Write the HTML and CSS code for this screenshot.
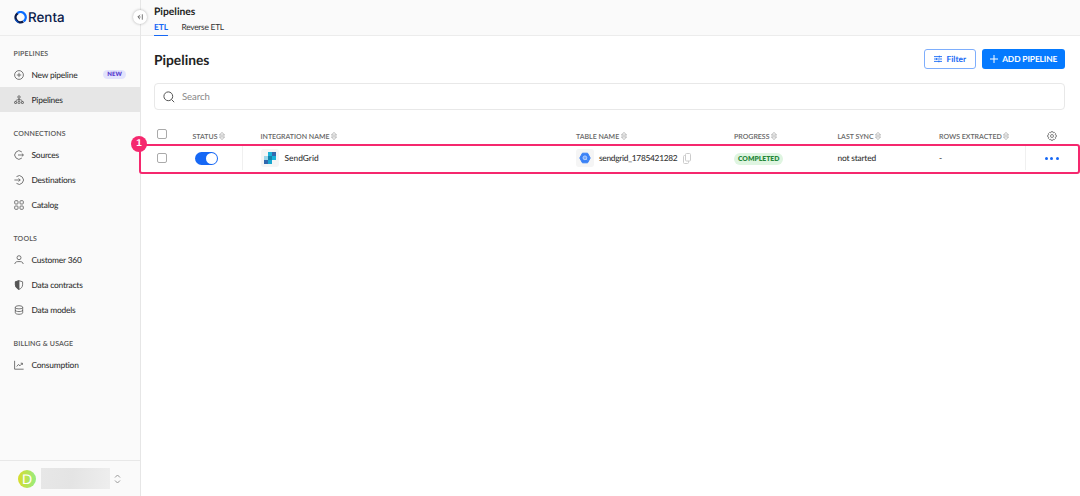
FILE: index.html
```html
<!DOCTYPE html>
<html lang="en">
  <head>
    <meta charset="UTF-8" />
    <meta name="viewport" content="width=device-width, initial-scale=1.0" />
    <title>Pipelines</title>
    <link rel="stylesheet" href="styles.css">
  </head>
  <body>
    <svg class="sprite" width="0" height="0">
      <symbol id="sort" viewBox="0 0 6 8">
        <path d="M3 .4 5.600 3.100H.4zM3 7.600.4 4.900h5.200z" />
      </symbol>
    </svg>
    <div class="app">
      <aside class="sidebar">
        <div class="sidebar__header">
          <svg class="logo" viewBox="0 0 13 13">
            <path d="M3.800 2.200A4.900 4.900 0 0 0 9.300 10.500" stroke="#0b1a4a" stroke-width="2.400" />
            <path d="M3.400 2.100A5.100 5.100 0 0 1 9.600 10.400" stroke="#0a6cff" stroke-width="2.400" />
            <path d="M1.400 8.500A5.500 5.500 0 0 0 4.500 11.600" stroke="#0a6cff" stroke-width="1" />
          </svg>
          <span class="logo-text">Renta</span>
          <button type="button" class="collapse">
            <svg width="8" height="8" viewBox="0 0 8 8"><path d="M4 1.800 1.800 4 4 6.200M2 4h2.600M6.300 1.300v5.400" /></svg>
          </button>
        </div>
        <nav class="nav">
          <section class="nav__group">
            <h2>PIPELINES</h2>
            <a class="nav__item">
              <svg viewBox="0 0 10 10"><circle cx="5" cy="5" r="4.400" /><path d="M5 2.800v4.400M2.800 5h4.400" /></svg>
              New pipeline
              <span class="nav__new">NEW</span>
            </a>
            <a class="nav__item nav__item--active">
              <svg viewBox="0 0 10 10"><circle cx="5" cy="2" r="1.200" /><rect x=".6" y="6.500" width="2" height="2" rx=".5" /><rect x="4" y="6.500" width="2" height="2" rx=".5" /><rect x="7.400" y="6.500" width="2" height="2" rx=".5" /><path d="M5 3.200v3.300M1.600 6.500C1.800 5.300 3 4.600 5 4.600s3.200.7 3.400 1.900" /></svg>
              Pipelines
            </a>
          </section>
          <section class="nav__group">
            <h2>CONNECTIONS</h2>
            <a class="nav__item">
              <svg viewBox="0 0 10 10"><path d="M7.800 1.900A4.200 4.200 0 1 0 7.800 8.100M4 5h5.400M7.800 3.500 9.400 5 7.800 6.500" /></svg>
              Sources
            </a>
            <a class="nav__item">
              <svg viewBox="0 0 10 10"><path d="M2.500 1.600A4.300 4.300 0 1 1 2.500 8.400M.4 5h5.800M4.600 3.400 6.200 5 4.600 6.600" /></svg>
              Destinations
            </a>
            <a class="nav__item">
              <svg viewBox="0 0 10 10"><rect x=".7" y=".7" width="3.300" height="3.300" rx=".8" /><rect x="6" y=".7" width="3.300" height="3.300" rx=".8" /><rect x=".7" y="6" width="3.300" height="3.300" rx=".8" /><rect x="6" y="6" width="3.300" height="3.300" rx=".8" /></svg>
              Catalog
            </a>
          </section>
          <section class="nav__group">
            <h2>TOOLS</h2>
            <a class="nav__item">
              <svg viewBox="0 0 10 10"><circle cx="5" cy="2.700" r="2" /><path d="M.8 9c.2-1.600 1.400-2.400 3-2.400h2.400c1.600 0 2.800.8 3 2.400" /></svg>
              Customer 360
            </a>
            <a class="nav__item">
              <svg viewBox="0 0 10 10"><path d="M5 .7 8.600 1.800v3C8.600 7 7 8.600 5 9.400 3 8.600 1.400 7 1.400 4.800v-3z" /><path class="solid" d="M5 .7v8.700C3 8.600 1.400 7 1.400 4.800v-3z" /></svg>
              Data contracts
            </a>
            <a class="nav__item">
              <svg viewBox="0 0 10 10"><ellipse cx="5" cy="2.300" rx="3.700" ry="1.600" /><path d="M1.300 2.300v5.400c0 2.100 7.400 2.100 7.400 0V2.300M1.300 5c0 2.100 7.400 2.100 7.400 0" /></svg>
              Data models
            </a>
          </section>
          <section class="nav__group">
            <h2>BILLING &amp; USAGE</h2>
            <a class="nav__item">
              <svg viewBox="0 0 10 10"><path d="M.6.800v8.400h9M2.700 6.500l1.700-2 1.600 1.300 2.300-2.500M6.700 3.200h1.700v1.700" /></svg>
              Consumption
            </a>
          </section>
        </nav>
        <div class="account">
          <span class="account__avatar">D</span>
          <span class="account__name"></span>
          <svg class="account__toggle" width="7" height="10" viewBox="0 0 7 10"><path d="M1 3.500 3.500 1 6 3.500M1 6.500 3.500 9 6 6.500" /></svg>
        </div>
      </aside>

      <main class="main">
        <header class="topbar">
          <div class="topbar__title">Pipelines</div>
          <div class="tabs">
            <a class="tabs__tab tabs__tab--active">ETL</a>
            <a class="tabs__tab">Reverse ETL</a>
          </div>
        </header>

        <div class="heading">
          <h1>Pipelines</h1>
          <button type="button" class="btn btn--outline">
            <svg width="8" height="8" viewBox="0 0 9 8"><path d="M0 1.300h9M0 4h9M0 6.700h9M6 .3v2M2.800 3v2M5.500 5.700v2" /></svg>
            Filter
          </button>
          <button type="button" class="btn btn--primary">
            <svg width="8" height="8" viewBox="0 0 8 8"><path d="M4 0v8M0 4h8" /></svg>
            ADD PIPELINE
          </button>
        </div>

        <div class="search">
          <svg width="12" height="12" viewBox="0 0 12 12"><circle cx="5.300" cy="5.300" r="4.400" /><path d="m8.500 8.500 2.700 2.700" /></svg>
          <span>Search</span>
        </div>

        <div class="table">
          <div class="table__row table__head">
            <span><i class="checkbox"></i></span>
            <span>STATUS<svg class="sort"><use href="#sort" /></svg></span>
            <span>INTEGRATION NAME<svg class="sort"><use href="#sort" /></svg></span>
            <span>TABLE NAME<svg class="sort"><use href="#sort" /></svg></span>
            <span>PROGRESS<svg class="sort"><use href="#sort" /></svg></span>
            <span>LAST SYNC<svg class="sort"><use href="#sort" /></svg></span>
            <span>ROWS EXTRACTED<svg class="sort"><use href="#sort" /></svg></span>
            <span class="table__settings">
              <svg class="gear" width="10" height="10" viewBox="0 0 10 10"><path d="M4.200.6h1.600l.4 1.200 1.200-.4 1.200 1.200-.4 1.200 1.200.4v1.600l-1.200.4.4 1.200-1.200 1.200-1.200-.4-.4 1.200H4.200l-.4-1.200-1.200.4-1.200-1.200.4-1.200L.6 5.800V4.200l1.200-.4-.4-1.200 1.200-1.200 1.200.4z" /><circle cx="5" cy="5" r="1.500" /></svg>
            </span>
          </div>
          <div class="table__row table__item">
            <b class="marker">1</b>
            <span><i class="checkbox"></i></span>
            <span class="table__status"><i class="toggle"></i></span>
            <span>
              <i class="tile">
                <svg width="12" height="12" viewBox="0 0 12 12"><path d="M0 4h4v8H0z" fill="#9dd7ea" /><path d="M4 4h4v8H4z" fill="#1aa7cf" /><path d="M4 0h8v8H8V4H4z" fill="#18b1d8" /><path d="M0 8h4v4H0zM8 0h4v4H8z" fill="#3268ae" /><path d="M4 4h4v4H4z" fill="#1383ad" /></svg>
              </i>
              SendGrid
            </span>
            <span class="table__name">
              <i class="tile">
                <svg width="12" height="12" viewBox="0 0 12 12"><path d="M3.400 1.200h5.200L11.200 6 8.600 10.800H3.400L.8 6z" fill="#3b82f6" stroke="#3b82f6" stroke-linejoin="round" /><circle cx="5.900" cy="5.800" r="1.900" fill="#78a9fa" stroke="#d6e5ff" stroke-width=".7" /><path d="m7.300 7.200 1 1" stroke="#d6e5ff" stroke-width=".7" /></svg>
              </i>
              sendgrid_1785421282
              <svg class="copy" width="8" height="11" viewBox="0 0 8 11"><rect x="2.500" y=".5" width="5" height="7.500" rx="1" /><path d="M2.500 2.500h-1a1 1 0 0 0-1 1v6a1 1 0 0 0 1 1h3a1 1 0 0 0 1-1V8" /></svg>
            </span>
            <span><em class="badge">COMPLETED</em></span>
            <span class="table__sync">not started</span>
            <span>-</span>
            <span class="table__actions"><i></i><i></i><i></i></span>
          </div>
        </div>
      </main>
    </div>
  </body>
</html>
```
FILE: styles.css
```css
* {
  box-sizing: border-box;
}

body {
  margin: 0;
  font-family: Lato, "Liberation Sans", sans-serif;
  font-size: 8.4px;
  text-rendering: geometricPrecision;
  color: #333;
  background-color: #fff;
}

h1,
h2 {
  margin: 0;
}

button {
  font-family: inherit;
  padding: 0;
  text-rendering: inherit;
}

svg {
  flex: none;
  fill: none;
  stroke: currentColor;
}

.sprite {
  position: absolute;
}

.app {
  display: flex;
  height: 496px;
}

/* sidebar */

.sidebar {
  display: flex;
  flex-direction: column;
  width: 141px;
  flex: none;
  background-color: #fafafa;
  border-right: 1px solid #e6e6e6;
}

.sidebar__header {
  position: relative;
  display: flex;
  align-items: center;
  height: 36px;
  padding-left: 14px;
  border-bottom: 1px solid #ececec;
}

.logo {
  width: 13px;
  height: 13px;
}

.logo-text {
  margin-left: 1px;
  font-family: Inter, sans-serif;
  font-size: 13.4px;
  font-weight: 500;
  color: #0b1a4a;
}

.collapse {
  position: absolute;
  right: -7px;
  top: 10px;
  display: flex;
  align-items: center;
  justify-content: center;
  width: 14px;
  height: 14px;
  border: 0;
  border-radius: 50%;
  background-color: #fff;
  box-shadow: 0 0 3px rgba(0, 0, 0, 0.3);
  color: #555;
}

.collapse svg {
  stroke-width: 0.8;
}

.nav {
  flex: 1;
  padding-top: 13px;
}

.nav__group {
  margin-bottom: 17.1px;
}

.nav__group h2 {
  margin-bottom: 3.6px;
  padding-left: 13.5px;
  font-size: 7px;
  line-height: 10px;
  font-weight: 600;
  letter-spacing: 0.15px;
  color: #555;
}

.nav__item {
  display: flex;
  align-items: center;
  height: 24.75px;
  padding: 0 14px;
  font-weight: 500;
  letter-spacing: -0.2px;
}

.nav__item svg {
  width: 10px;
  height: 10px;
  margin-right: 7.5px;
  stroke-width: 0.8;
  color: #555;
}

.nav__item .solid {
  fill: #555;
}

.nav__item--active {
  background-color: #e6e6e6;
}

.nav__new {
  margin-left: auto;
  padding: 0 4px;
  border-radius: 5px;
  font-size: 6px;
  line-height: 9px;
  font-weight: 800;
  letter-spacing: 0.1px;
  color: #5b3fd0;
  background-color: #e2e3fc;
}

.account {
  display: flex;
  align-items: center;
  height: 36px;
  padding-left: 18px;
  border-top: 1px solid #e8e8e8;
}

.account__avatar {
  width: 18px;
  height: 18px;
  border-radius: 50%;
  font-family: "Liberation Sans", sans-serif;
  font-size: 14px;
  line-height: 18px;
  text-align: center;
  color: #fff;
  background: linear-gradient(90deg, #d8dc2c, #96ec80);
}

.account__name {
  width: 69px;
  height: 21px;
  margin: 0 4px 0 5px;
  background: linear-gradient(100deg, #e7e7e7, #e4e4e4 45%, #eee);
}

.account__toggle {
  color: #999;
}

/* content */

.main {
  flex: 1;
  min-width: 0;
}

.topbar {
  height: 36px;
  padding: 5px 13px 0;
  background-color: #fafafa;
  border-bottom: 1px solid #ececec;
}

.topbar__title {
  font-size: 10.3px;
  line-height: 14px;
  font-weight: 700;
  color: #222;
}

.tabs {
  display: flex;
  gap: 13.5px;
}

.tabs__tab {
  height: 17px;
  line-height: 16px;
  letter-spacing: -0.25px;
}

.tabs__tab--active {
  font-weight: 700;
  letter-spacing: -0.1px;
  color: #1668f5;
  border-bottom: 1px solid #1668f5;
}

.heading {
  display: flex;
  align-items: center;
  gap: 6px;
  height: 47px;
  padding: 0 15px 0 13px;
}

.heading h1 {
  flex: 1;
  font-size: 13.8px;
  font-weight: 700;
  color: #222;
}

.btn {
  display: flex;
  align-items: center;
  justify-content: center;
  gap: 4.5px;
  height: 20px;
  margin-bottom: 1px;
  border-radius: 3px;
  font-size: 8.4px;
  font-weight: 700;
}

.btn--outline {
  width: 52px;
  border: 1px solid #7eaefc;
  color: #1668f5;
  background-color: #fff;
}

.btn--primary {
  width: 83px;
  border: 0;
  letter-spacing: -0.1px;
  color: #fff;
  background-color: #057aff;
}

.search {
  display: flex;
  align-items: center;
  height: 27px;
  margin: 0 15px 0 13px;
  padding-left: 8px;
  gap: 7px;
  border: 1px solid #e8e8e8;
  border-radius: 4px;
  font-size: 9.6px;
  letter-spacing: -0.1px;
  color: #888;
}

.search span {
  padding-top: 1px;
}

.search svg {
  color: #555;
}

.table {
  padding-top: 14.5px;
}

.table__row {
  display: grid;
  grid-template-columns: 51.5px 68px 315.5px 158px 103.5px 101.5px 86.5px 1fr;
  align-items: center;
}

.table__row > span {
  display: flex;
  align-items: center;
}

.table__row > span:first-of-type {
  padding-left: 16px;
}

.table__head {
  height: 19px;
  font-size: 7px;
  font-weight: 600;
  color: #666;
}

.table__head > span {
  padding-top: 5px;
}

.table__head > span:first-of-type {
  padding-top: 0;
}

.sort {
  width: 6px;
  height: 8px;
  margin: 0 0 1px 1.5px;
  stroke-width: 0.6;
  color: #888;
}

.table__row > .table__settings,
.table__row > .table__actions {
  justify-content: center;
}

.table__row > .table__settings {
  padding: 4px 2px 0 0;
}

.gear {
  stroke-width: 0.8;
}

.table__item {
  position: relative;
  height: 30px;
  margin-left: -2px;
  padding-bottom: 1px;
  border: 2px solid #f5286e;
  border-radius: 3px;
  font-weight: 500;
}

.marker {
  position: absolute;
  left: -10px;
  top: -10px;
  width: 16px;
  height: 16px;
  border-radius: 50%;
  font-family: "Liberation Sans", sans-serif;
  font-size: 10px;
  line-height: 16px;
  text-align: center;
  color: #fff;
  background-color: #f5286e;
}

.checkbox {
  width: 10px;
  height: 10px;
  border: 1px solid #aaa;
  border-radius: 2px;
}

.table__status {
  height: 24px;
  width: 50px;
  padding-left: 2px;
  border-right: 1px solid #f0f0f0;
}

.toggle {
  width: 23px;
  height: 13px;
  padding: 1px;
  border-radius: 7px;
  background-color: #1668f5;
}

.toggle::after {
  content: "";
  display: block;
  width: 11px;
  height: 11px;
  margin-left: auto;
  border-radius: 50%;
  background-color: #fff;
}

.tile {
  display: flex;
  align-items: center;
  justify-content: center;
  width: 18px;
  height: 18px;
  margin-right: 6px;
  border-radius: 3px;
  background-color: #f5f5f5;
}

.tile svg {
  stroke: none;
}

.table__name {
  letter-spacing: -0.3px;
}

.table__name .tile {
  margin-right: 5px;
}

.table__sync {
  letter-spacing: -0.2px;
}

.copy {
  margin-left: 6px;
  color: #ccc;
}

.badge {
  margin-top: 1px;
  padding: 0 4px;
  border-radius: 6px;
  font-size: 6.8px;
  line-height: 12px;
  font-style: normal;
  font-weight: 800;
  color: #26883a;
  background-color: #dff5e1;
}

.table__actions {
  height: 24px;
  gap: 2.5px;
  margin-left: -1px;
  border-left: 1px solid #f0f0f0;
}

.table__actions i {
  width: 3px;
  height: 3px;
  border-radius: 50%;
  background-color: #1668f5;
}
```
